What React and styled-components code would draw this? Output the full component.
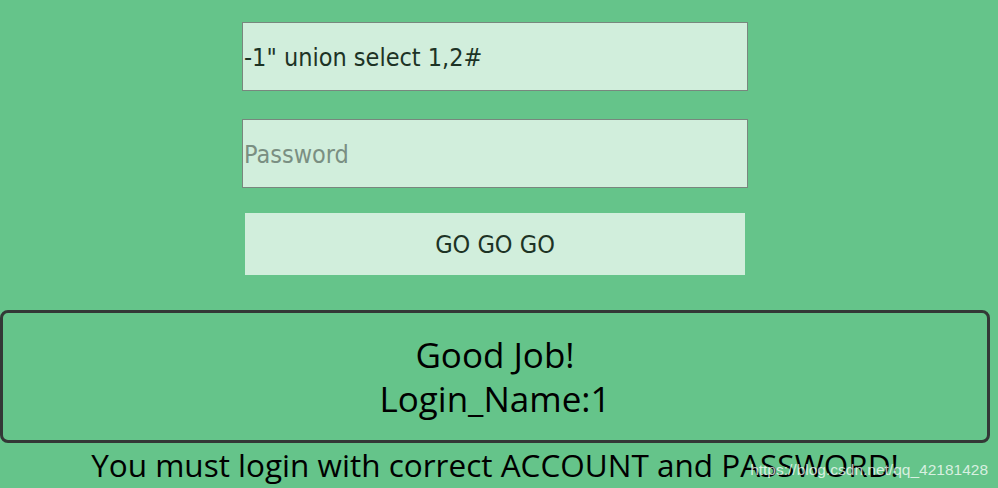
import React from 'react'
import styled, { createGlobalStyle } from 'styled-components'

const GlobalStyle = createGlobalStyle`
    html, body {
        margin: 0;
        padding: 0;
        background-color: #65c48a;
        overflow: hidden;
    }
`

const Page = styled.div`
    width: 990px;
    height: 488px;
    display: flex;
    flex-direction: column;
    align-items: center;
    padding-top: 22px;
    box-sizing: border-box;
    position: relative;
`

const Form = styled.form`
    display: flex;
    flex-direction: column;
    align-items: center;
    width: 506px;
`

const Field = styled.input`
    width: 506px;
    height: 69px;
    box-sizing: border-box;
    margin-bottom: ${props => props.gap || 0}px;
    background-color: #d1eedc;
    border: 1px solid #78877e;
    padding: 2px 0 0 1px;
    font-family: 'DejaVu Sans Condensed', 'DejaVu Sans', sans-serif;
    font-size: 25px;
    color: #1d3325;
    outline: none;

    &::placeholder {
        color: #7a8f82;
    }
`

const Button = styled.button`
    width: 500px;
    height: 62px;
    margin-top: 25px;
    background-color: #d1eedc;
    border: none;
    font-family: 'DejaVu Sans Condensed', 'DejaVu Sans', sans-serif;
    font-size: 25px;
    color: #1d3325;
`

const ResultBox = styled.div`
    width: 990px;
    height: 133px;
    margin-top: 35px;
    box-sizing: border-box;
    border: 3px solid #333836;
    border-radius: 8px;
    display: flex;
    flex-direction: column;
    justify-content: center;
    align-items: center;
    font-family: 'Open Sans', sans-serif;
    font-size: 35px;
    line-height: 44px;
    color: #000;
`

const Notice = styled.p`
    margin: 1px 0 0;
    font-family: 'Open Sans', sans-serif;
    font-size: 31.5px;
    line-height: 42px;
    color: #000;
`

const Watermark = styled.span`
    position: absolute;
    right: 2px;
    bottom: 9px;
    font-family: 'Liberation Sans', Arial, sans-serif;
    font-size: 15.5px;
    color: rgba(255, 255, 255, 0.75);
`

const App = () => {
    return (
        <>
            <GlobalStyle />
            <Page>
                <Form onSubmit={e => e.preventDefault()}>
                    <Field type='text' defaultValue={'-1" union select 1,2#'} gap={28} />
                    <Field type='password' placeholder='Password' />
                    <Button type='submit'>GO GO GO</Button>
                </Form>
                <ResultBox>
                    <div>Good Job!</div>
                    <div>Login_Name:1</div>
                </ResultBox>
                <Notice>You must login with correct ACCOUNT and PASSWORD!</Notice>
                <Watermark>https://blog.csdn.net/qq_42181428</Watermark>
            </Page>
        </>
    )
}

export default App
